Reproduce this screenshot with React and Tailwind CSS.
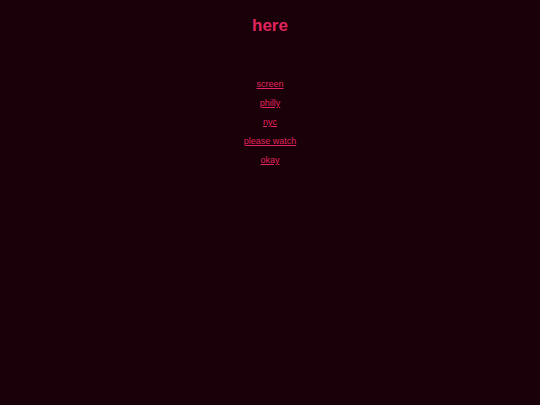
const links = ["screen", "philly", "nyc", "please watch", "okay"];

export default function App() {
  return (
    <main className="min-h-screen bg-[#1a0008] pt-4 text-center font-['Liberation_Sans',Arial,sans-serif] text-[#e0245e]">
      <h1 className="text-[17px] leading-5 font-bold">here</h1>
      <ul className="mt-[43px] flex flex-col items-center gap-[9px] text-[9px] leading-[10px]">
        {links.map((label) => (
          <li key={label}>
            <a href="#" className="underline">{label}</a>
          </li>
        ))}
      </ul>
    </main>
  );
}
